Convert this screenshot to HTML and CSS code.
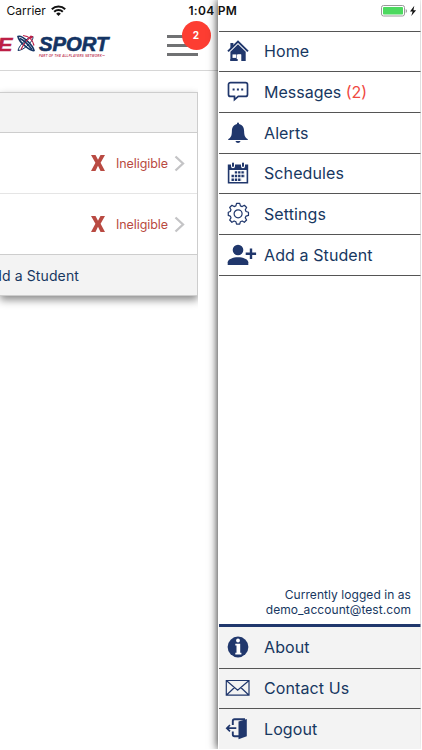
FILE: index.html
```html
<!DOCTYPE html>
<html lang="en">
<head>
<meta charset="utf-8">
<title>Menu</title>
<link rel="stylesheet" href="styles.css">
</head>
<body>
<div class="phone">
  <div class="status">
    <span class="carrier">Carrier</span>
    <svg class="wifi" width="15" height="11" viewBox="0 0 15 11"><g fill="none" stroke="#111" stroke-width="2"><path d="M.8 4.200a9.600 9.600 0 0 1 13.400 0"/><path d="M3.200 6.800a6.100 6.100 0 0 1 8.600 0"/></g><path d="M5.200 8.700a3.300 3.300 0 0 1 4.600 0L7.500 11z" fill="#111"/></svg>
    <span class="time">1:04 PM</span>
    <svg class="battery" width="37" height="12" viewBox="0 0 37 12"><rect x=".5" y=".5" width="23" height="10.5" rx="2" fill="#fff" stroke="#999"/><rect x="2" y="2" width="20" height="7.5" rx=".8" fill="#4cd95f"/><path d="M24.7 4v4q1.3-.6 1.3-2t-1.3-2z" fill="#999"/><path d="M33.3.8 29 6.4h2.600L30.300 11l4.800-5.800h-2.700z" fill="#111"/></svg>
  </div>

  <main class="page">
    <header class="topbar">
      <svg class="logo" width="112" height="28" viewBox="0 0 112 28">
        <g font-family="Liberation Sans, sans-serif" font-weight="bold" font-style="italic">
          <text x="-2.500" y="17.700" font-size="19" textLength="15" lengthAdjust="spacingAndGlyphs" fill="#bd1f46" stroke="#bd1f46" stroke-width=".5">E</text>
          <text x="39" y="17.700" font-size="19.5" textLength="69.500" lengthAdjust="spacingAndGlyphs" fill="#143464" stroke="#143464" stroke-width=".6">SPORT</text>
          <text x="39" y="24" font-size="2.9" textLength="66" fill="#c03a58">PART OF THE ALLPLAYERS NETWORK™</text>
        </g>
        <g fill="none" transform="translate(26 10.500)">
          <path d="M-8-7C-4-9 7 2 8 7 5 8-7-1-8-7z" stroke="#143464" stroke-width="1.600"/>
          <path d="M-8 7C-7 1 4-8 7-7 8-3-2 7-8 7z" stroke="#143464" stroke-width="1"/>
          <path d="M-5 6C-2-1 1-5 7-7M-3-8Q6-7 8 2" stroke="#bd1f46" stroke-width="1.200"/>
          <path d="M-6-5Q0-2 6 6" stroke="#143464" stroke-width="1.600"/>
          <circle cx="5" cy="-6.500" r="1.500" fill="#bd1f46"/>
        </g>
      </svg>
      <div class="burger"><i></i><i></i><i></i><b class="badge">2</b></div>
    </header>
    <div class="cardwrap">
      <section class="card">
        <div class="cardhead"></div>
        <div class="student"><svg class="cross" width="14" height="16" viewBox="0 0 14 16"><path d="M0 0h4.500L7 4.800 9.500 0H14L9.600 7.800 14 16H9.500L7 10.700 4.500 16H0l4.400-8.200z" fill="#b94a42"/></svg><span>Ineligible</span><svg class="chev" width="11" height="17" viewBox="0 0 11 17"><path d="m1.500 1.500 7.500 7-7.500 7" fill="none" stroke="#c4c4c6" stroke-width="2.300"/></svg></div>
        <div class="student"><svg class="cross" width="14" height="16" viewBox="0 0 14 16"><path d="M0 0h4.500L7 4.800 9.500 0H14L9.600 7.800 14 16H9.500L7 10.700 4.500 16H0l4.400-8.200z" fill="#b94a42"/></svg><span>Ineligible</span><svg class="chev" width="11" height="17" viewBox="0 0 11 17"><path d="m1.500 1.500 7.500 7-7.500 7" fill="none" stroke="#c4c4c6" stroke-width="2.300"/></svg></div>
        <div class="cardfoot"><span>Add a Student</span></div>
      </section>
    </div>
  </main>

  <nav class="drawer">
    <div class="item"><svg viewBox="0 0 30 24"><path d="M1 12.400 11 2.600l10 9.800" fill="none" stroke="#20376c" stroke-width="2"/><path d="M3.400 4h3v4l-3 3zM11 5.300l7.700 7.500V22h-4.400v-6.600h-4.600V22H3.400v-9.200z" fill="#20376c"/><path d="M5.500 15.400h3.700v3.500H5.500z" fill="#fff"/><path d="M10.700 15.400h3.300V22h-3.300z" fill="#fff"/><path d="M3.400 20h7.300v2H3.400z" fill="#20376c"/></svg><span>Home</span></div>
    <div class="item"><svg viewBox="0 0 30 24"><path d="M3.500 2.600h15a2 2 0 0 1 2 2v9.800a2 2 0 0 1-2 2h-7.200l-3.800 3.300v-3.300h-4a2 2 0 0 1-2-2V4.600a2 2 0 0 1 2-2z" fill="none" stroke="#20376c" stroke-width="1.700"/><path d="M5.600 8.500h2v2h-2zm4.300 0h2v2h-2zm4.300 0h2v2h-2z" fill="#20376c"/></svg><span class="tight">Messages <em>(2)</em></span></div>
    <div class="item"><svg viewBox="0 0 30 24"><path d="M10 3V2.500a1 1 0 0 1 2 0V3c3.700.8 5 3.600 5.100 7 .1 4.500 1 6.500 3.700 8.300v.7H1.200v-.7C4 16.500 4.800 14.500 4.900 10 5 6.600 6.300 3.800 10 3zM8.500 20h5c-.4 2.600-4.600 2.600-5 0z" fill="#20376c"/></svg><span>Alerts</span></div>
    <div class="item"><svg viewBox="0 0 30 24"><path d="M.8 3.500h20.400v19H.8zM2.400 9v12h17.200V9z" fill="#20376c" fill-rule="evenodd"/><g stroke-linecap="round"><path d="M6 2.700v2.500M16 2.700v2.500" stroke="#fff" stroke-width="4"/><path d="M6 2.500v2.500M16 2.500v2.500" stroke="#20376c" stroke-width="2"/></g><path d="M7.800 11.400h10M4.500 15h13.500M4.500 18.700h10" stroke="#20376c" stroke-width="2.400" stroke-dasharray="2.400 .9"/></svg><span>Schedules</span></div>
    <div class="item"><svg viewBox="0 0 30 24"><path d="M9.300 1.900h3.400l.7 2.600 1.900.8 2.300-1.400 2.400 2.400-1.400 2.400.8 1.800 2.600.8v3.400l-2.600.7-.8 1.900 1.400 2.300-2.400 2.400-2.300-1.400-1.900.8-.7 2.600H9.300l-.7-2.600-1.900-.8-2.300 1.400L2 19.600l1.400-2.300-.8-1.900-2.100-.7v-3.400l2.100-.8.8-1.800L2 6.300l2.400-2.400 2.300 1.400 1.900-.8z" transform="translate(.8 -.4) scale(.94)" fill="none" stroke="#20376c" stroke-width="1.300" stroke-linejoin="round"/><circle cx="11.100" cy="11.800" r="4" fill="none" stroke="#20376c" stroke-width="1.200"/></svg><span>Settings</span></div>
    <div class="item"><svg viewBox="0 0 30 24"><circle cx="11" cy="7" r="5.300" fill="#20376c"/><path d="M.7 22v-2.800c0-3 5.300-5 10.300-5s10.300 2 10.300 5V22z" fill="#20376c"/><path d="M24 5.500v10.400M18.700 10.700h10.400" stroke="#20376c" stroke-width="2.400"/></svg><span>Add a Student</span></div>
    <p class="account">Currently logged in as<span>demo_account@test.com</span></p>
    <div class="bottom">
      <div class="item"><svg viewBox="0 0 30 24"><circle cx="11" cy="12" r="10.400" fill="#20376c"/><circle cx="11" cy="5.500" r="1.900" fill="#fff"/><path d="M8.300 8.800h4.900v8.900h1.200v1.700H8.300v-1.700h1.200v-7.200H8.300z" fill="#fff"/></svg><span>About</span></div>
      <div class="item"><svg viewBox="0 0 30 24"><path d="M-.7 4.500h22.700v14.700H-.7zL10.650 14.200 22 4.500M-.7 19.200 7.500 11.500M22 19.200 13.800 11.500" fill="none" stroke="#20376c" stroke-width="1.200"/></svg><span>Contact Us</span></div>
      <div class="item"><svg viewBox="0 0 30 24"><path d="m11.500 4.500 8.300-2.600v17.400l-8.300 3z" fill="#20376c"/><path d="M5.800 8V4q0-1.700 1.700-1.700H18M5.800 14.500v3q0 1.700 1.700 1.700h5" fill="none" stroke="#20376c" stroke-width="1.900"/><path d="M9.300 11.200H0M3 8l-3.200 3.200L3 14.400" fill="none" stroke="#20376c" stroke-width="1.700"/></svg><span>Logout</span></div>
    </div>
  </nav>
</div>
</body>
</html>
```
FILE: styles.css
```css
* { box-sizing: border-box; }
body { margin: 0; background: #fff; font-family: Inter, "Liberation Sans", sans-serif; color: #173761; }
svg { display: block; overflow: visible; flex: none; }
.phone { position: relative; display: flex; width: 422px; height: 750px; overflow: hidden; }
.status { position: absolute; z-index: 3; top: 0; left: 0; width: 422px; height: 22px; display: flex; align-items: center; padding: 0 4px 0 6.500px; color: #111; font-size: 12px; line-height: 22px; }
.carrier { width: 44.500px; letter-spacing: 0; }
.wifi { position: relative; top: -1px; }
.time { margin-left: 122.500px; font-weight: 600; width: 50px; white-space: nowrap; letter-spacing: .3px; }
.battery { margin-left: auto; }
.page { width: 218px; flex: none; overflow: hidden; }
.topbar { display: flex; height: 71px; border-bottom: 1px solid #d6d6d6; padding-top: 33px; }
.logo { width: 112px; height: 28px; overflow: hidden; }
.burger { position: relative; margin-left: 55px; padding-top: 2px; display: flex; flex-direction: column; gap: 6px; }
.burger i { width: 31px; height: 3px; background: #707173; }
.badge { position: absolute; left: 14.500px; top: -12.500px; width: 29px; height: 29px; border-radius: 50%; background: #fd3d32; color: #fff; font-size: 10px; line-height: 29px; text-align: center; }
.cardwrap { width: 197.500px; padding-top: 21px; height: 240px; overflow: hidden; }
.card { height: 203.500px; border: solid #cdcdcd; border-width: 1px 1px 1px 0; background: #fff; box-shadow: 0 4px 8px rgba(0,0,0,.45); }
.cardhead { height: 40px; background: #f3f3f3; border-bottom: 1px solid #cdcdcd; }
.student { display: flex; align-items: center; height: 61px; padding-left: 91px; font-size: 12.500px; color: #b94a42; border-bottom: 1px solid #e5e5e5; }
.student + .student { border-color: #cdcdcd; }
.student span { margin-left: 11px; width: 52px; white-space: nowrap; letter-spacing: -.08px; }
.chev { margin-left: 6px; }
.cardfoot { height: 40px; background: #f3f3f3; display: flex; align-items: center; justify-content: flex-end; padding-right: 117.500px; font-size: 14px; white-space: nowrap; letter-spacing: .12px; }
.drawer { z-index: 2; width: 202.500px; height: 749px; background: #fff; box-shadow: 0 0 9px rgba(0,0,0,.9); clip-path: inset(0 0 0 -16px); display: flex; flex-direction: column; padding-top: 30.500px; }
.item { height: 40.700px; flex: none; display: flex; align-items: center; margin-left: 1px; padding-left: 8px; border-top: 1px solid #555; font-size: 16px; letter-spacing: .1px; }
.item svg { width: 30px; height: 24px; }
.item span { margin-left: 7px; white-space: nowrap; }
.item .tight { letter-spacing: 0; }
.item em { font-style: normal; color: #ef493f; }
.account { margin: 0 0 6.500px 1px; padding-right: 9.500px; border-top: 1px solid #555; flex: 1; display: flex; flex-direction: column; justify-content: flex-end; text-align: right; font-size: 12px; line-height: 14.500px; letter-spacing: .06px; }
.bottom { border-top: 3px solid #20376c; margin-left: 1px; background: #f3f3f3; }
.bottom .item { margin-left: 0; }
.bottom .item:first-child { border-top: 0; }
```
